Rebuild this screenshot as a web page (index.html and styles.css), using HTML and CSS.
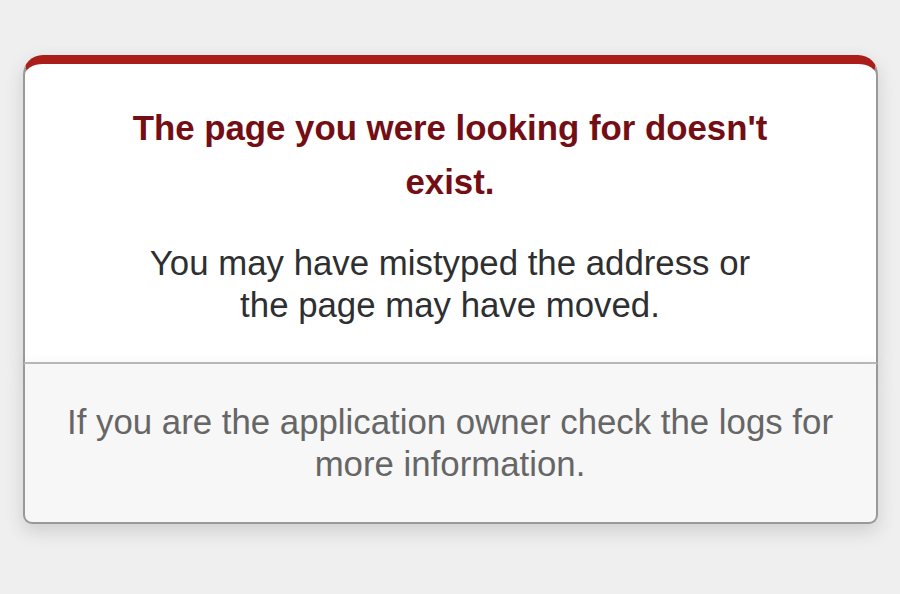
FILE: index.html
```html
<!DOCTYPE html>
<html lang="en">

<head>
  <meta charset="UTF-8">
  <meta name="viewport" content="width=device-width, initial-scale=1.0">
  <title>The page you were looking for doesn't exist (404)</title>
  <link rel="stylesheet" href="styles.css">
</head>

<body>
  <div class="dialog">
    <div class="dialog-main">
      <h1>The page you were looking for doesn't exist.</h1>
      <p>You may have mistyped the address or the page may have moved.</p>
    </div>
    <p class="dialog-note">If you are the application owner check the logs for more information.</p>
  </div>
</body>

</html>
```

FILE: styles.css
```css
body {
  background-color: #efefef;
  color: #2e2f30;
  text-align: center;
  font-family: "Liberation Sans", Arial, sans-serif;
  font-size: 34.8px;
  margin: 0;
}

.dialog {
  width: 95%;
  margin: 55px auto 0;
}

.dialog-main {
  border: 2px solid #ccc;
  border-right-color: #999;
  border-left-color: #999;
  border-bottom-color: #bbb;
  border-top: 9px solid #aa1d18;
  border-top-left-radius: 20px;
  border-top-right-radius: 20px;
  background-color: white;
  padding: 13px 10% 0;
  box-shadow: 0 7px 18px rgba(50, 50, 50, 0.17);
}

h1 {
  font-size: 100%;
  color: #730e15;
  line-height: 54px;
  margin: 24px 0;
}

.dialog-main p {
  margin: 33px 20px 36px;
  line-height: 42px;
}

.dialog-note {
  margin: 0 0 36px;
  padding: 37px 30px 37px;
  line-height: 42px;
  background-color: #f7f7f7;
  border: 2px solid #ccc;
  border-right-color: #999;
  border-left-color: #999;
  border-bottom-color: #999;
  border-top: none;
  border-bottom-left-radius: 9px;
  border-bottom-right-radius: 9px;
  color: #666;
  box-shadow: 0 7px 18px rgba(50, 50, 50, 0.17);
}
```
